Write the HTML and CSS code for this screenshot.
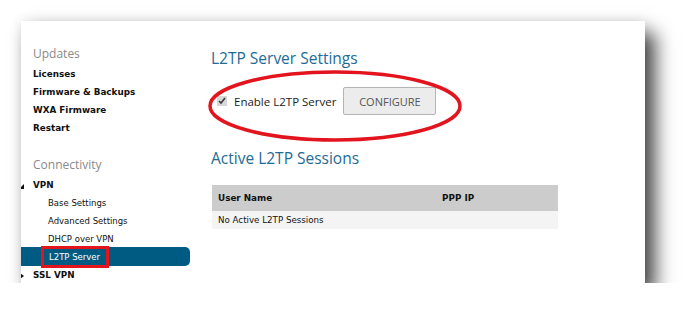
FILE: index.html
```html
<!DOCTYPE html>
<html lang="en">
<head>
  <meta charset="UTF-8" />
  <title>L2TP Server</title>
  <link rel="stylesheet" href="styles.css">
</head>
<body>
  <div class="shot">
    <div class="card">

      <!-- Side navigation -->
      <nav class="sidebar">
        <div class="group-title">Updates</div>
        <a class="nav-item">Licenses</a>
        <a class="nav-item">Firmware &amp; Backups</a>
        <a class="nav-item">WXA Firmware</a>
        <a class="nav-item">Restart</a>

        <div class="group-title connectivity">Connectivity</div>
        <a class="nav-item tree open">VPN</a>
        <a class="nav-sub">Base Settings</a>
        <a class="nav-sub">Advanced Settings</a>
        <a class="nav-sub">DHCP over VPN</a>
        <a class="nav-sub selected"><span class="mark">L2TP Server</span></a>
        <a class="nav-item tree closed">SSL VPN</a>
      </nav>

      <!-- Main panel -->
      <main class="content">
        <h2>L2TP Server Settings</h2>
        <div class="settings-row">
          <label class="check"><input type="checkbox" checked /> Enable L2TP Server</label>
          <button class="btn">CONFIGURE</button>
        </div>

        <h2 class="sessions-title">Active L2TP Sessions</h2>
        <table class="sessions">
          <thead>
            <tr><th class="col-user">User Name</th><th>PPP IP</th></tr>
          </thead>
          <tbody>
            <tr><td colspan="2">No Active L2TP Sessions</td></tr>
          </tbody>
        </table>
      </main>

      <!-- red annotation around the setting -->
      <svg class="circle" width="258" height="76" viewBox="0 0 258 76">
        <ellipse cx="128" cy="37" rx="125" ry="34" fill="none" stroke="#e2141d" stroke-width="3.5"/>
      </svg>
    </div>
  </div>
</body>
</html>
```

FILE: styles.css
```css
body {
  margin: 0;
  background-color: #ffffff;
  font-family: "DejaVu Sans", Verdana, sans-serif;
}

.shot {
  padding: 21px 0 0 21px;
}

.card {
  position: relative;
  display: flex;
  width: 624px;
  height: 262px;
  background: #ffffff;
  overflow: hidden;
  box-shadow: 10px 12px 18px rgba(0,0,0,0.72), 0 0 12px rgba(0,0,0,0.1);
}

/* Sidebar */
.sidebar {
  width: 169px;
  flex-shrink: 0;
  padding-top: 23px;
  box-sizing: border-box;
}

.group-title {
  padding-left: 12px;
  height: 20px;
  line-height: 20px;
  font-family: "Open Sans", sans-serif;
  font-size: 12px;
  color: #8a8a8a;
}

.group-title.connectivity {
  margin-top: 19px;
}

.nav-item, .nav-sub {
  display: block;
  height: 18px;
  line-height: 20px;
  color: #111;
  white-space: nowrap;
}

.nav-item {
  padding-left: 12px;
  font-weight: bold;
  font-size: 8.8px;
  position: relative;
}

.nav-sub {
  padding-left: 27px;
  font-size: 8.5px;
}

.tree::before {
  content: "";
  position: absolute;
  left: -2px;
  top: 9px;
  border-style: solid;
}

.tree.open::before {
  border-width: 0 0 5px 5px;
  border-color: transparent transparent #111 transparent;
}

.tree.closed::before {
  border-width: 3px 0 3px 4px;
  border-color: transparent transparent transparent #111;
  left: -1px;
  top: 8px;
}

.nav-sub.selected {
  background: #005b82;
  color: #ffffff;
  border-radius: 0 5px 5px 0;
  height: 19px;
  line-height: 19px;
  margin-bottom: -1px;
}

.mark {
  display: inline-block;
  margin-left: -7px;
  padding: 0 6px 0 5px;
  line-height: 16px;
  border: 3px solid #e3141c;
  margin-top: -1px;
}

/* Content */
.content {
  padding: 27px 0 0 21px;
  flex: 1;
}

.content h2 {
  margin: 0;
  height: 20px;
  line-height: 20px;
  font-family: "Open Sans", sans-serif;
  font-weight: normal;
  font-size: 15.5px;
  color: #1e6b95;
}

.settings-row {
  display: flex;
  align-items: center;
  margin-top: 19px;
  height: 28px;
}

.check {
  display: flex;
  align-items: center;
  margin-left: 6px;
  font-family: "Open Sans", sans-serif;
  font-size: 11.5px;
  color: #222;
}

.check input {
  width: 10px;
  height: 10px;
  margin: 0 7px 0 0;
  accent-color: #d8d8d8;
}

.btn {
  margin-left: 7px;
  width: 93px;
  height: 28px;
  padding: 0;
  background: #ececec;
  border: 1px solid #b4b4b4;
  border-radius: 2px;
  font-family: "Open Sans", sans-serif;
  font-size: 11px;
  color: #555;
}

.sessions-title {
  margin-top: 33px !important;
}

.sessions {
  margin: 17px 0 0 1px;
  width: 346px;
  border-collapse: collapse;
  font-size: 8.7px;
  color: #111;
}

.sessions th {
  height: 26px;
  padding: 0 0 0 6px;
  text-align: left;
  background: #cccccc;
  font-weight: bold;
  font-size: 8.8px;
}

.sessions th.col-user {
  width: 218px;
}

.sessions td {
  height: 18px;
  padding: 0 0 0 6px;
  background: #f4f4f4;
}

/* annotation */
.circle {
  position: absolute;
  left: 186px;
  top: 48px;
}
```
